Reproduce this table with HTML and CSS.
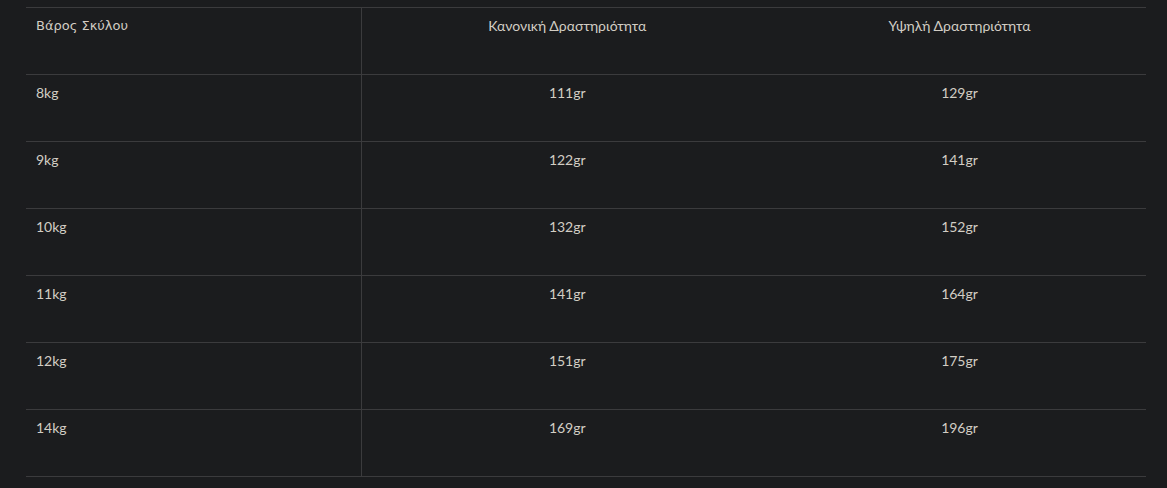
FILE: index.html
```html
<!DOCTYPE html>
<html lang="el">
<head>
<meta charset="utf-8">
<title>Βάρος Σκύλου</title>
<link rel="stylesheet" href="styles.css">
</head>
<body>
<div class="wrap">
<table class="feed">
<colgroup><col class="c1"><col class="c2"><col class="c3"></colgroup>
<thead>
<tr><th class="first alt">Βάρος Σκύλου</th><th>Κανονική Δραστηριότητα</th><th>Υψηλή Δραστηριότητα</th></tr>
</thead>
<tbody>
<tr><td class="first">8kg</td><td>111gr</td><td>129gr</td></tr>
<tr><td class="first">9kg</td><td>122gr</td><td>141gr</td></tr>
<tr><td class="first">10kg</td><td>132gr</td><td>152gr</td></tr>
<tr><td class="first">11kg</td><td>141gr</td><td>164gr</td></tr>
<tr><td class="first">12kg</td><td>151gr</td><td>175gr</td></tr>
<tr><td class="first">14kg</td><td>169gr</td><td>196gr</td></tr>
</tbody>
</table>
</div>
</body>
</html>
```
FILE: styles.css
```css
html, body {
  margin: 0;
  background: #1b1c1e;
}
.wrap {
  padding: 7px 21px 0 26px;
}
.feed {
  width: 1120px;
  border-collapse: collapse;
  table-layout: fixed;
  font-family: Lato, "Open Sans", sans-serif;
  font-size: 14px;
  line-height: 20px;
  color: #d2cdc4;
  border-top: 1px solid #3b3b3d;
}
.c1 { width: 335px; }
.c2 { width: 412px; }
.c3 { width: 373px; }
.feed th, .feed td {
  height: 67px;
  box-sizing: border-box;
  padding: 8px 10px 0;
  vertical-align: top;
  text-align: center;
  font-weight: 400;
  border-bottom: 1px solid #3b3b3d;
}
.feed .first {
  text-align: left;
  border-right: 1px solid #3b3b3d;
}
.feed .alt {
  font-family: "DejaVu Sans", sans-serif;
  font-size: 13px;
}
```
